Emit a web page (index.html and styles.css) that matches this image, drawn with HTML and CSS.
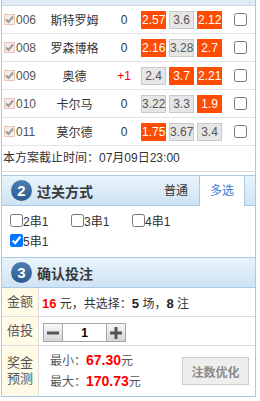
FILE: index.html
```html
<!DOCTYPE html>
<html lang="zh-CN">
<head>
    <meta charset="UTF-8">
    <meta name="viewport" content="width=device-width, initial-scale=1.0">
    <title>投注确认</title>
    <link rel="stylesheet" href="styles.css">
</head>
<body>
    <div class="wrap">
        <div class="top-strip"></div>

        <ul class="match-list">
            <li class="match">
                <span class="pick"><svg width="9" height="9" viewBox="0 0 9 9"><path d="M1 4.5 L3.5 7 L8 1.5" fill="none" stroke="#9a9a9a" stroke-width="2"/></svg></span>
                <span class="num">006</span>
                <span class="name">斯特罗姆</span>
                <span class="rq">0</span>
                <span class="odds"><span class="sp on">2.57</span><span class="sp">3.6</span><span class="sp on">2.12</span></span>
                <input type="checkbox" class="dan">
            </li>
            <li class="match">
                <span class="pick"><svg width="9" height="9" viewBox="0 0 9 9"><path d="M1 4.5 L3.5 7 L8 1.5" fill="none" stroke="#9a9a9a" stroke-width="2"/></svg></span>
                <span class="num">008</span>
                <span class="name">罗森博格</span>
                <span class="rq">0</span>
                <span class="odds"><span class="sp on">2.16</span><span class="sp">3.28</span><span class="sp on">2.7</span></span>
                <input type="checkbox" class="dan">
            </li>
            <li class="match">
                <span class="pick"><svg width="9" height="9" viewBox="0 0 9 9"><path d="M1 4.5 L3.5 7 L8 1.5" fill="none" stroke="#9a9a9a" stroke-width="2"/></svg></span>
                <span class="num">009</span>
                <span class="name">奥德</span>
                <span class="rq plus">+1</span>
                <span class="odds"><span class="sp">2.4</span><span class="sp on">3.7</span><span class="sp on">2.21</span></span>
                <input type="checkbox" class="dan">
            </li>
            <li class="match">
                <span class="pick"><svg width="9" height="9" viewBox="0 0 9 9"><path d="M1 4.5 L3.5 7 L8 1.5" fill="none" stroke="#9a9a9a" stroke-width="2"/></svg></span>
                <span class="num">010</span>
                <span class="name">卡尔马</span>
                <span class="rq">0</span>
                <span class="odds"><span class="sp">3.22</span><span class="sp">3.3</span><span class="sp on">1.9</span></span>
                <input type="checkbox" class="dan">
            </li>
            <li class="match">
                <span class="pick"><svg width="9" height="9" viewBox="0 0 9 9"><path d="M1 4.5 L3.5 7 L8 1.5" fill="none" stroke="#9a9a9a" stroke-width="2"/></svg></span>
                <span class="num">011</span>
                <span class="name">莫尔德</span>
                <span class="rq">0</span>
                <span class="odds"><span class="sp on">1.75</span><span class="sp">3.67</span><span class="sp">3.4</span></span>
                <input type="checkbox" class="dan">
            </li>
        </ul>

        <div class="deadline">本方案截止时间：07月09日23:00</div>

        <div class="sec-head">
            <span class="step">2</span>
            <span class="sec-title">过关方式</span>
            <div class="tabs">
                <span class="tab">普通</span>
                <span class="tab active">多选</span>
            </div>
        </div>
        <div class="chuan-list">
            <label><input type="checkbox">2串1</label>
            <label><input type="checkbox">3串1</label>
            <label><input type="checkbox">4串1</label>
            <label><input type="checkbox" checked>5串1</label>
        </div>

        <div class="sec-head">
            <span class="step">3</span>
            <span class="sec-title">确认投注</span>
        </div>
        <div class="confirm">
            <div class="confirm-row">
                <div class="label">金额</div>
                <div class="val"><span class="sum"><b class="red">16</b> 元，共选择：<b>5</b> 场，<b>8</b> 注</span></div>
            </div>
            <div class="confirm-row">
                <div class="label">倍投</div>
                <div class="val">
                    <div class="stepper">
                        <span class="step-btn"><svg width="12" height="12" viewBox="0 0 12 12"><rect x="0" y="4.5" width="12" height="3" fill="#555"/></svg></span>
                        <input type="text" class="times" value="1">
                        <span class="step-btn"><svg width="12" height="12" viewBox="0 0 12 12"><rect x="0" y="4.5" width="12" height="3" fill="#555"/><rect x="4.5" y="0" width="3" height="12" fill="#555"/></svg></span>
                    </div>
                </div>
            </div>
            <div class="confirm-row prize">
                <div class="label">奖金<br>预测</div>
                <div class="val">
                    <div class="prize-lines">
                        <div>最小：<em>67.30</em>元</div>
                        <div>最大：<em>170.73</em>元</div>
                    </div>
                    <button class="opt-btn">注数优化</button>
                </div>
            </div>
        </div>
    </div>
</body>
</html>
```

FILE: styles.css
```css
body {
    margin: 0;
    padding: 0;
    background: #fff;
    font-family: "Liberation Sans", "Noto Sans CJK SC", sans-serif;
    font-size: 12px;
    color: #333;
}
.wrap {
    width: 253px;
    margin-left: 1px;
    border-left: 1px solid #a9c9e6;
    border-right: 1px solid #a9c9e6;
    border-bottom: 1px solid #a9c9e6;
}
.top-strip {
    height: 5px;
    background: #e0ebf6;
    border-bottom: 1px solid #c8dbec;
}
.match-list {
    list-style: none;
    margin: 0;
    padding: 0;
}
.match {
    display: flex;
    align-items: center;
    height: 27px;
    border-bottom: 1px solid #e2e2e2;
}
.pick {
    display: flex;
    align-items: center;
    justify-content: center;
    box-sizing: border-box;
    width: 11px;
    height: 11px;
    margin-left: 2px;
    border: 1px solid #e5c6b8;
    background: #f4eeeb;
}
.num {
    width: 20px;
    margin-left: 1px;
    color: #555;
}
.name {
    width: 77px;
    text-align: center;
    color: #333;
}
.rq {
    width: 22px;
    text-align: center;
    color: #333;
}
.rq.plus {
    color: #f00;
}
.odds {
    display: flex;
    gap: 3px;
    margin-left: 6px;
}
.sp {
    box-sizing: border-box;
    width: 25px;
    height: 18px;
    line-height: 16px;
    text-align: center;
    background: #e6e6e6;
    border: 1px solid #c9c9c9;
    color: #555;
}
.sp.on {
    background: #ff4c00;
    border-color: #ff4c00;
    color: #fff;
}
.dan {
    margin: 0 0 0 12px;
    width: 13px;
    height: 13px;
}
.deadline {
    height: 25px;
    line-height: 25px;
    padding-left: 1px;
    border-bottom: 1px solid #dcdcdc;
    margin-bottom: 3px;
}
.sec-head {
    display: flex;
    align-items: center;
    height: 29px;
    border-top: 1px solid #a9c9e6;
    border-bottom: 1px solid #a9c9e6;
    background: linear-gradient(#e9f4fb, #cfe3f3);
}
.step {
    width: 21px;
    height: 21px;
    margin-left: 9px;
    border-radius: 50%;
    background: linear-gradient(#4b7db4, #2c5b8f);
    color: #fff;
    font-size: 15px;
    font-weight: bold;
    line-height: 21px;
    text-align: center;
}
.sec-title {
    margin-left: 5px;
    font-size: 14px;
    font-weight: bold;
    color: #3a3a3a;
}
.tabs {
    display: flex;
    align-self: stretch;
    margin-left: auto;
    margin-right: 10px;
    margin-bottom: -1px;
}
.tab {
    width: 46px;
    box-sizing: border-box;
    line-height: 30px;
    text-align: center;
    color: #333;
}
.tab.active {
    background: #fff;
    border-left: 1px solid #a9c9e6;
    border-right: 1px solid #a9c9e6;
    color: #3a7bd5;
}
.chuan-list {
    display: grid;
    grid-template-columns: repeat(3, 61px);
    padding: 4px 0 7px 4px;
}
.chuan-list label {
    display: flex;
    align-items: center;
    height: 20px;
    color: #333;
}
.chuan-list input {
    margin: 0 0 0 4px;
    width: 13px;
    height: 13px;
}
.confirm-row {
    display: flex;
    border-bottom: 1px solid #dcdcdc;
}
.confirm-row:last-child {
    border-bottom: none;
}
.label {
    display: flex;
    align-items: center;
    justify-content: center;
    width: 36px;
    border-right: 1px solid #dcdcdc;
    background: #fffbe7;
    font-size: 13px;
    line-height: 16px;
    color: #555;
    text-align: center;
}
.val {
    flex: 1;
    display: flex;
    align-items: center;
    height: 28px;
    padding-left: 3px;
    color: #333;
}
.sum {
    white-space: pre;
}
.val b {
    font-weight: bold;
    color: #222;
    font-size: 13px;
}
.val b.red {
    color: #f00;
}
.stepper {
    display: flex;
    height: 17px;
    margin-left: 1px;
    margin-top: 3px;
    border: 1px solid #a6a6a6;
}
.step-btn {
    display: flex;
    align-items: center;
    justify-content: center;
    width: 18px;
    background: linear-gradient(#f8f8f8, #d6d6d6);
}
.times {
    box-sizing: border-box;
    width: 45px;
    height: 17px;
    margin: 0;
    padding: 0;
    border: none;
    border-left: 1px solid #a6a6a6;
    border-right: 1px solid #a6a6a6;
    font-family: inherit;
    font-size: 12px;
    font-weight: bold;
    text-align: center;
    color: #000;
    outline: none;
}
.prize .val {
    height: 50px;
    padding-left: 11px;
}
.prize-lines {
    line-height: 20px;
    color: #555;
}
.prize-lines em {
    font-style: normal;
    font-weight: bold;
    font-size: 14px;
    color: #f00;
}
.opt-btn {
    margin-left: auto;
    margin-right: 6px;
    width: 67px;
    height: 28px;
    padding: 0;
    background: #eee;
    border: 1px solid #ccc;
    font-family: inherit;
    font-size: 12px;
    font-weight: bold;
    color: #8a8a8a;
}
```
